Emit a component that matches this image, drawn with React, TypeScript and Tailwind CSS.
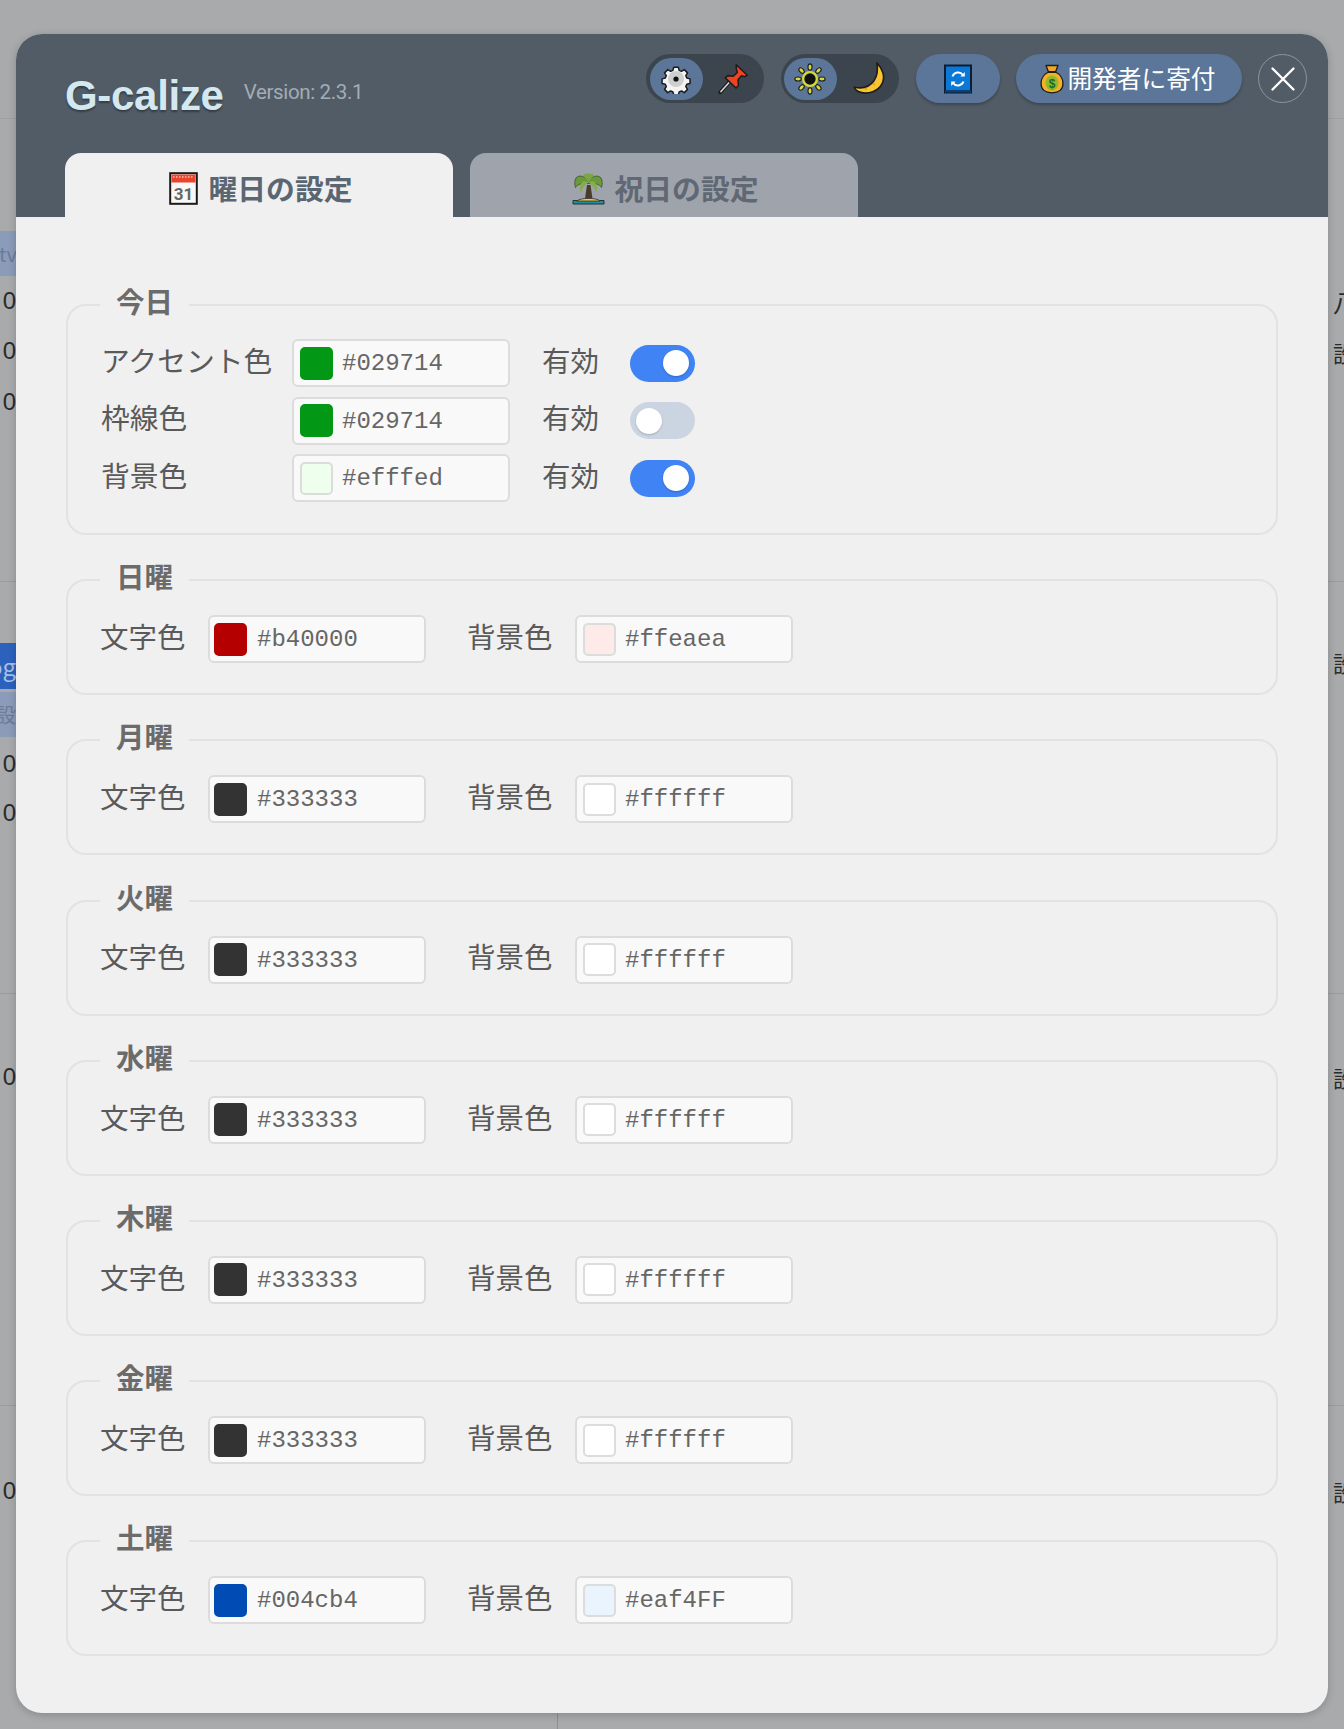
import React from "react";

const jp = "font-['Noto_Sans_CJK_JP','Noto_Sans',sans-serif]";

function Gear() {
  return (
    <svg width="30" height="30" viewBox="0 0 30 30">
      <path d="M12.600 2.500h4.800l.9 3.400 2.400 1 3-1.800 3.400 3.400-1.800 3 1 2.400 3.400.9v4.800l-3.400.9-1 2.400 1.800 3-3.400 3.400-3-1.800-2.400 1-.9 3.400h-4.800l-.9-3.400-2.400-1-3 1.800-3.400-3.400 1.800-3-1-2.400-3.400-.9v-4.800l3.400-.9 1-2.400-1.800-3 3.400-3.400 3 1.800 2.400-1z" fill="#f4f4f4" stroke="#1c1c1c" strokeWidth="1.600" strokeLinejoin="round" transform="translate(0.800 0.800) scale(0.95)" />
      <circle cx="15" cy="15" r="8" fill="#cfcfcf" />
      <circle cx="15" cy="15" r="2.600" fill="#111" />
    </svg>
  );
}

function Pin() {
  return (
    <svg width="33" height="33" viewBox="0 0 30 30">
      <path d="M3 27.500l8-9" stroke="#1d1d1d" strokeWidth="3.400" strokeLinecap="round" />
      <path d="M3.600 26.900l7.400-8.200" stroke="#d9d9d9" strokeWidth="1.400" strokeLinecap="round" />
      <path d="M17.500 2.500l10 9.500-2.200 1.300-3-.7-3.200 3.600.4 5.200-2.200 2.200L7.500 14.400l2.300-2 5 .5 3.700-3.400-.9-3.200z" fill="#ef4423" stroke="#1d1d1d" strokeWidth="1.400" strokeLinejoin="round" />
    </svg>
  );
}

function Sun() {
  const rays = [0, 45, 90, 135, 180, 225, 270, 315];
  return (
    <svg width="32" height="32" viewBox="0 0 30 30">
      {rays.map((r) => (
        <ellipse key={r} cx="15" cy="3.800" rx="1.900" ry="3" fill="#d6d83a" stroke="#1a1a1a" strokeWidth="1" transform={`rotate(${r} 15 15)`} />
      ))}
      <circle cx="15" cy="15" r="6.400" fill="#111" stroke="#d6d83a" strokeWidth="2.200" />
    </svg>
  );
}

function Moon() {
  return (
    <svg width="37" height="37" viewBox="0 0 32 32">
      <path d="M21.500 2.500c5 5 7.500 12 4.500 18-3.200 6.500-12 9.500-18.500 7.500-2.500-.8-5-2.700-5.500-4.500 7 1.500 13.500-.5 17-5.500 3-4.500 3.500-10 2.500-15.500z" fill="#fbc531" stroke="#1d1d1d" strokeWidth="1.400" strokeLinejoin="round" />
      <circle cx="19" cy="21" r="1" fill="#e59c16" />
      <circle cx="12" cy="25" r="1" fill="#e59c16" />
    </svg>
  );
}

function Sync() {
  return (
    <svg width="30" height="30" viewBox="0 0 30 30">
      <rect x="2" y="1.500" width="26" height="27" fill="#0a78d7" stroke="#0c1c33" strokeWidth="2" />
      <rect x="2" y="26" width="26" height="2.500" fill="#0c3f73" />
      <path d="M9.500 12.500a6 6 0 0 1 10.500-1.500" fill="none" stroke="#fff" strokeWidth="2" />
      <path d="M21.800 8v4.500h-4.500z" fill="#fff" />
      <path d="M20.500 17.500a6 6 0 0 1-10.500 1.500" fill="none" stroke="#fff" strokeWidth="2" />
      <path d="M8.200 22v-4.500h4.500z" fill="#fff" />
    </svg>
  );
}

function Bag() {
  return (
    <svg width="24" height="30" viewBox="0 0 24 30">
      <path d="M6 1.500h12l-2.500 6.500h-7z" fill="#f0a726" stroke="#1d1d1d" strokeWidth="1.300" strokeLinejoin="round" />
      <path d="M8.500 8c-4 2-7.500 6.500-7.500 11.500C1 26 6 28.800 12 28.800S23 26 23 19.500C23 14.500 19.500 10 15.500 8z" fill="#f3b02a" stroke="#1d1d1d" strokeWidth="1.300" />
      <path d="M8 8h8" stroke="#1d1d1d" strokeWidth="2" />
      <ellipse cx="12" cy="19" rx="6.500" ry="7.500" fill="#94b82c" />
      <text x="12" y="23.500" textAnchor="middle" fontSize="12" fontWeight="700" fill="#1b6b2d" fontFamily="Liberation Sans">$</text>
    </svg>
  );
}

function Calendar() {
  return (
    <svg width="29" height="33" viewBox="0 0 29 33">
      <rect x="1.200" y="1.200" width="26.600" height="30.600" fill="#f8f8f8" stroke="#1a1a1a" strokeWidth="2" />
      <rect x="2.500" y="2.500" width="24" height="8" fill="#e8452c" />
      <path d="M4 5h21" stroke="#fff" strokeWidth="1.200" strokeDasharray="1.500 1.500" />
      <text x="14.500" y="27.500" textAnchor="middle" fontSize="17" fill="#666" fontFamily="Roboto">31</text>
    </svg>
  );
}

function Palm() {
  return (
    <svg width="33" height="33" viewBox="0 0 33 33">
      <path d="M1 28.500h31v3.500H1z" fill="#1f8ea0" stroke="#21323a" strokeWidth="1" />
      <path d="M5 29c3-3.500 20-3.500 23 0z" fill="#f4c63a" stroke="#21323a" strokeWidth="0.800" />
      <path d="M15 13h3.500l2 13.500h-7.500z" fill="#4a3a2a" />
      <path d="M16.500 11.500C14 3.500 7 2.500 4 6c-1.500 2-1.500 7-.5 9.500 2.500-3.500 6-4.500 13-4z" fill="#6b9a3c" stroke="#35562b" strokeWidth="0.800" />
      <path d="M16.500 11.500c2.500-8 9.500-9 12.500-5.500 1.500 2 1.500 7 .5 9.500-2.500-3.500-6-4.500-13-4z" fill="#6b9a3c" stroke="#35562b" strokeWidth="0.800" />
      <path d="M16.500 10.500C12.500 8 8.500 9.500 8 15c-.2 2.500.2 4.500 1 5.500 1-4 3.500-7.500 7.500-10z" fill="#85ad4b" />
      <path d="M16.500 10.500c4-2.500 8-1 8.500 4.500.2 2.500-.2 4.500-1 5.500-1-4-3.500-7.500-7.500-10z" fill="#85ad4b" />
      <path d="M11 3c2-2 9-2 11 0l-5.500 8z" fill="#7da544" />
    </svg>
  );
}

function ColorInput({ color, value, light, tight }: { color: string; value: string; light?: boolean; tight?: boolean }) {
  return (
    <div className="flex h-[48px] w-[218px] items-center rounded-[6px] border-2 border-[#dcdcdc] bg-[#f9f9f9]">
      <span
        className={`block h-[33px] rounded-[5px] border-2 ${tight ? "ml-[4px] mr-[10px] w-[33px]" : "ml-[6px] mr-[9px] w-[33px]"}`}
        style={{ backgroundColor: color, borderColor: light ? "#dcdcdc" : color }}
      />
      <span className="pt-[2px] font-['Liberation_Mono',monospace] text-[24px] leading-none text-[#666666]">{value}</span>
    </div>
  );
}

function Toggle({ on }: { on: boolean }) {
  return (
    <span className={`flex h-[37px] w-[65px] items-center rounded-full px-[6px] ${on ? "justify-end bg-[#3f83f4]" : "justify-start bg-[#cbd5e1]"}`}>
      <span className="block h-[26px] w-[26px] rounded-full bg-white shadow-[0_1px_2px_rgba(0,0,0,0.2)]" />
    </span>
  );
}

function Legend({ children }: { children: React.ReactNode }) {
  return (
    <legend className={`px-[16px] pb-[8px] text-[28.500px] font-bold leading-[24px] text-[#6b6b6b] ${jp}`}>{children}</legend>
  );
}

function TodayRow({ label, color, value, on, light }: { label: string; color: string; value: string; on: boolean; light?: boolean }) {
  return (
    <div className="flex h-[48px] items-center pl-[1px]">
      <span className="w-[191px] whitespace-nowrap pb-[6px] text-[28.800px] leading-none text-[#5a5a5a]">{label}</span>
      <ColorInput color={color} value={value} light={light} />
      <span className="ml-[32px] w-[88px] pb-[6px] text-[28.500px] leading-none text-[#5a5a5a]">有効</span>
      <Toggle on={on} />
    </div>
  );
}

function DayBox({ day, text, bg, light }: { day: string; text: string; bg: string; light?: boolean }) {
  return (
    <fieldset className={`m-0 h-[131px] rounded-[20px] border-2 border-[#e2e2e2] pl-[32px] ${jp}`}>
      <Legend>{day}</Legend>
      <div className="mt-[19px] flex h-[48px] items-center">
        <span className="w-[108px] pb-[6px] text-[28.500px] leading-none text-[#5a5a5a]">文字色</span>
        <ColorInput color={text} value={text} tight />
        <span className="ml-[41px] w-[108px] pb-[6px] text-[28.500px] leading-none text-[#5a5a5a]">背景色</span>
        <ColorInput color={bg} value={bg} light={light !== false} />
      </div>
    </fieldset>
  );
}

function BgChip({ className, children }: { className: string; children: React.ReactNode }) {
  return <div className={`absolute left-0 flex w-[16px] items-center overflow-hidden ${className}`}>{children}</div>;
}

export default function App() {
  return (
    <div className={`relative h-[1729px] w-[1344px] overflow-hidden bg-[#a9aaac] ${jp}`}>
      {/* dimmed page behind the dialog */}
      <div className="absolute left-0 top-[118px] h-px w-full bg-[#a0a0a2]" />
      <div className="absolute left-0 top-[581px] h-px w-full bg-[#9b9b9d]" />
      <div className="absolute left-0 top-[993px] h-px w-full bg-[#9b9b9d]" />
      <div className="absolute left-0 top-[1405px] h-px w-full bg-[#9b9b9d]" />
      <div className="absolute bottom-0 left-[557px] top-[1700px] w-px bg-[#8e8e90]" />
      <BgChip className="top-[231px] h-[45px] bg-[#8b9cba] text-[20px] text-[#6b7c99]"><span className="-ml-[1px]">tv</span></BgChip>
      <BgChip className="top-[643px] h-[46px] justify-end bg-[#2c62bd] text-[24px] text-[#a9c0e8]"><span>og</span></BgChip>
      <BgChip className="top-[692px] h-[45px] justify-end bg-[#8b9cba] text-[20px] text-[#6b7c99]"><span>設</span></BgChip>
      {[287, 337, 388, 750, 799, 1063, 1477].map((t) => (
        <span key={t} className="absolute left-0 w-[16px] overflow-hidden text-right font-['Liberation_Sans',sans-serif] text-[24px] leading-[28px] text-[#2b2b2b]" style={{ top: t }}>
          0
        </span>
      ))}
      <span className="absolute left-[1333px] top-[288px] w-[11px] overflow-hidden text-[24px] leading-[28px] text-[#2b2b2b]">八</span>
      {[338, 648, 1063, 1477].map((t) => (
        <span key={t} className="absolute left-[1333px] w-[11px] overflow-hidden text-[22px] leading-[28px] text-[#2b2b2b]" style={{ top: t }}>設</span>
      ))}

      {/* dialog */}
      <div className="absolute left-[16px] top-[34px] flex h-[1679px] w-[1312px] flex-col overflow-hidden rounded-[26px] bg-[#f0f0f0] shadow-[0_2px_8px_rgba(0,0,0,0.2)]">
        <header className="h-[183px] shrink-0 bg-[#525c67] pl-[49px]">
          <div className="flex h-[119px] items-start">
            <h1 className="mt-[38px] font-['Liberation_Sans',sans-serif] text-[42px] font-bold leading-[48px] tracking-[-0.3px] text-[#d4e8f0] [text-shadow:0_2px_2px_rgba(0,0,0,0.35)]">G-calize</h1>
            <span className="ml-[20px] mt-[46px] font-['Roboto',sans-serif] text-[20.500px] leading-[24px] tracking-[-0.35px] text-[#a3acb5]">Version: 2.3.1</span>
            <div className="ml-auto mr-[21px] mt-[20px] flex items-start">
              <div className="flex h-[49px] w-[118px] items-center rounded-full bg-[#3c444d] pl-[4px]">
                <span className="flex h-[42px] w-[53px] items-center justify-center rounded-full bg-[#5b7699]"><Gear /></span>
                <span className="flex w-[62px] justify-center"><Pin /></span>
              </div>
              <div className="ml-[17px] flex h-[49px] w-[118px] items-center rounded-full bg-[#3c444d] pl-[3px]">
                <span className="flex h-[42px] w-[54px] items-center justify-center rounded-full bg-[#5b7699]"><Sun /></span>
                <span className="flex w-[64px] justify-center pl-[6px]"><Moon /></span>
              </div>
              <button className="ml-[17px] flex h-[49px] w-[84px] items-center justify-center rounded-full bg-[#5b7699] shadow-[0_2px_3px_rgba(0,0,0,0.25)]"><Sync /></button>
              <button className="ml-[16px] flex h-[49px] w-[226px] items-center justify-center gap-[3px] rounded-full bg-[#5b7699] pr-[2px] text-[24.700px] leading-none text-white shadow-[0_2px_3px_rgba(0,0,0,0.25)]"><Bag /><span className="pb-[2px]">開発者に寄付</span></button>
              <button className="ml-[16px] flex h-[49px] w-[49px] items-center justify-center rounded-full border border-[#8d959d]">
                <svg width="26" height="26" viewBox="0 0 26 26"><path d="M2.500 2.500l21 21M23.500 2.500l-21 21" stroke="#fff" strokeWidth="2.400" strokeLinecap="round" /></svg>
              </button>
            </div>
          </div>
          <div className="flex h-[64px] gap-[17px]">
            <div className="flex h-[64px] w-[388px] items-center justify-center gap-[11px] rounded-t-[16px] bg-[#f0f0f0] pl-[3px] pt-[7px] text-[28.800px] font-bold leading-none text-[#5a6672]"><Calendar /><span className="pb-[1px]">曜日の設定</span></div>
            <div className="flex h-[64px] w-[388px] items-center justify-center gap-[10px] rounded-t-[16px] bg-[#9fa3ab] pl-[2px] pt-[7px] text-[28.800px] font-bold leading-none text-[#5f6873]"><Palm /><span className="pb-[1px]">祝日の設定</span></div>
          </div>
        </header>

        <main className="flex flex-col gap-[29.200px] px-[50px] pt-[72px]">
          <fieldset className="m-0 h-[246px] rounded-[20px] border-2 border-[#e2e2e2] pl-[32px]">
            <Legend>今日</Legend>
            <div className="mt-[18px] flex flex-col gap-[9.500px]">
              <TodayRow label="アクセント色" color="#029714" value="#029714" on />
              <TodayRow label="枠線色" color="#029714" value="#029714" on={false} />
              <TodayRow label="背景色" color="#efffed" value="#efffed" on light />
            </div>
          </fieldset>
          <DayBox day="日曜" text="#b40000" bg="#ffeaea" />
          <DayBox day="月曜" text="#333333" bg="#ffffff" />
          <DayBox day="火曜" text="#333333" bg="#ffffff" />
          <DayBox day="水曜" text="#333333" bg="#ffffff" />
          <DayBox day="木曜" text="#333333" bg="#ffffff" />
          <DayBox day="金曜" text="#333333" bg="#ffffff" />
          <DayBox day="土曜" text="#004cb4" bg="#eaf4FF" />
        </main>
      </div>
    </div>
  );
}
